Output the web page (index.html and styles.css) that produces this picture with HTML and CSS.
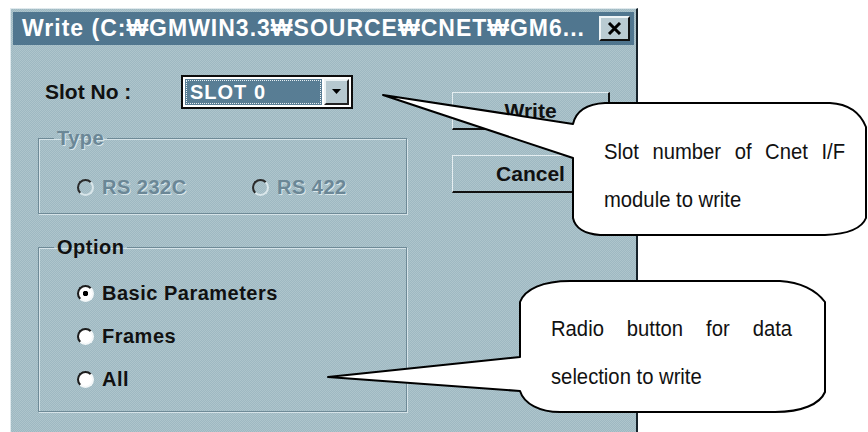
FILE: index.html
```html
<!DOCTYPE html>
<html lang="en">

<head>
    <meta charset="UTF-8">
    <meta name="viewport" content="width=device-width, initial-scale=1.0">
    <title>Write</title>
    <link rel="stylesheet" href="styles.css">
</head>

<body>
    <div class="dialog">
        <div class="titlebar">
            <span class="title">Write (C:₩GMWIN3.3₩SOURCE₩CNET₩GM6...</span>
            <span class="close">
                <svg width="15" height="13" viewBox="0 0 15 13">
                    <path d="M2 1 L13 12 M13 1 L2 12" stroke="#000" stroke-width="3" fill="none"/>
                </svg>
            </span>
        </div>
        <div class="content">
            <div class="left">
                <div class="slot-row">
                    <span class="label">Slot No :</span>
                    <div class="combo">
                        <div class="combo-field"><span class="focus">SLOT 0</span></div>
                        <div class="combo-btn">
                            <svg width="9" height="6" viewBox="0 0 9 6"><path d="M0 0 H9 L4.5 5 Z" fill="#000"/></svg>
                        </div>
                    </div>
                </div>

                <fieldset class="group group-type disabled">
                    <legend>Type</legend>
                    <div class="radio-row">
                        <label class="radio"><span class="dot"></span>RS 232C</label>
                        <label class="radio"><span class="dot"></span>RS 422</label>
                    </div>
                </fieldset>

                <fieldset class="group group-option">
                    <legend>Option</legend>
                    <div class="radio-list">
                        <label class="radio"><span class="dot checked"></span>Basic Parameters</label>
                        <label class="radio"><span class="dot"></span>Frames</label>
                        <label class="radio"><span class="dot"></span>All</label>
                    </div>
                </fieldset>
            </div>

            <div class="buttons">
                <div class="btn">Write</div>
                <div class="btn">Cancel</div>
            </div>
        </div>
    </div>

    <!-- callouts drawn over the dialog -->
    <svg class="callouts" width="868" height="432" viewBox="0 0 868 432">
        <path d="M383 95 L573 124 C576 111 586 104 605 103 L830 103 C848 104 860 112 866 127 L866 218 C862 228 850 234 825 235 L600 235 C585 234 575 228 573 218 L573 158 Z"/>
        <path d="M328 377 L520 357 L520 302 C525 289 543 281 570 281 L780 281 C800 282 816 290 825 302 L825 392 C820 404 802 412 775 412 L560 412 C540 412 524 404 520 391 Z"/>
    </svg>
    <div class="note note-slot">Slot number of Cnet I/F module to write</div>
    <div class="note note-radio">Radio button for data selection to write</div>
</body>

</html>
```

FILE: styles.css
```css
* {
    margin: 0;
    padding: 0;
    box-sizing: border-box;
}

html,
body {
    height: 100%;
    overflow: hidden;
    background: #fff;
}

body {
    font-family: "Liberation Sans", Arial, sans-serif;
}

.dialog {
    margin: 8px 0 0 10px;
    width: 628px;
    height: 424px;
    border-left: 1px solid #dfe9ed;
    border-top: 1px solid #dfe9ed;
    border-right: 2px solid #17232b;
    padding: 3px 2px 0 2px;
    background-color: #a6bec7;
    background-image: repeating-conic-gradient(#9eb8c2 0 25%, #aec5cc 0 50%);
    background-size: 2px 2px;
    overflow: hidden;
}

.titlebar {
    height: 33px;
    background: #50768f;
    display: flex;
    align-items: center;
    justify-content: space-between;
    padding: 0 4px 0 9px;
}

.title {
    color: #fff;
    font-weight: bold;
    font-size: 23px;
    letter-spacing: 1px;
    white-space: nowrap;
}

.close {
    width: 31px;
    height: 25px;
    background: #b9cbd2;
    border: 2px solid;
    border-color: #eef4f6 #101010 #101010 #eef4f6;
    display: flex;
    align-items: center;
    justify-content: center;
}

.content {
    display: flex;
    padding-left: 25px;
}

.left {
    width: 369px;
}

.slot-row {
    margin-top: 30px;
    height: 34px;
    display: flex;
    align-items: center;
}

.label {
    width: 143px;
    padding-left: 7px;
    font-weight: bold;
    font-size: 21px;
    color: #111;
}

.combo {
    width: 172px;
    height: 34px;
    display: flex;
    border: 2px solid #0c0c0c;
    background: #fff;
    padding: 2px;
}

.combo-field {
    flex: 1;
    background: #587d94;
    padding: 1px;
    margin-right: 2px;
}

.focus {
    display: block;
    height: 100%;
    border: 1px dotted #e6eef1;
    color: #fff;
    font-weight: bold;
    font-size: 20px;
    line-height: 22px;
    letter-spacing: 1px;
    padding-left: 3px;
}

.combo-btn {
    width: 25px;
    background: #b6c8cf;
    border: 2px solid;
    border-color: #eaf1f3 #222 #222 #eaf1f3;
    display: flex;
    align-items: center;
    justify-content: center;
}

.group {
    width: 369px;
    min-width: 0;
    border: 1px solid #6e8a97;
    box-shadow: inset 1px 1px 0 #d6e3e8, 1px 1px 0 #d6e3e8;
}

.group legend {
    margin-left: 15px;
    padding: 0 3px;
    font-weight: bold;
    font-size: 20px;
    line-height: 20px;
    letter-spacing: 0.5px;
    color: #111;
}

.group-type {
    margin-top: 19px;
    height: 86px;
    padding-top: 28px;
}

.group-option {
    margin-top: 23px;
    height: 175px;
    padding-top: 25px;
}

.radio-row {
    display: flex;
    padding-left: 38px;
}

.radio-row .radio:first-child {
    width: 175px;
}

.radio-list {
    display: flex;
    flex-direction: column;
    gap: 21px;
    padding-left: 38px;
}

.radio {
    display: flex;
    align-items: center;
    height: 22px;
    font-weight: bold;
    font-size: 20px;
    letter-spacing: 0.5px;
    color: #111;
}

.dot {
    width: 17px;
    height: 17px;
    border-radius: 50%;
    border: 2px solid;
    border-color: #1c1c1c #f4f8f9 #f4f8f9 #1c1c1c;
    background: #fff;
    margin-right: 8px;
    flex: none;
}

.dot.checked {
    background: radial-gradient(circle, #000 0 2.5px, #fff 3px);
}

.disabled legend,
.disabled .radio {
    color: #6b8796;
    text-shadow: 1px 1px 0 #d9e6ea;
}

.disabled .dot {
    background: transparent;
    border-color: #2a2a2a #d9e6ea #d9e6ea #2a2a2a;
}

.buttons {
    margin-left: 45px;
    width: 158px;
}

.btn {
    height: 38px;
    border-top: 1px solid #e4edf0;
    border-left: 1px solid #e4edf0;
    border-right: 2px solid #111;
    border-bottom: 2px solid #111;
    display: flex;
    align-items: center;
    justify-content: center;
    font-weight: bold;
    font-size: 21px;
    color: #111;
}

.btn:first-child {
    margin-top: 47px;
}

.btn + .btn {
    margin-top: 25px;
}

.callouts {
    position: absolute;
    left: 0;
    top: 0;
    pointer-events: none;
}

.callouts path {
    fill: #fff;
    stroke: #000;
    stroke-width: 2;
    stroke-linejoin: round;
}

/* narrow face: no condensed font installed, so squeeze Liberation Sans */
.note {
    position: absolute;
    width: 262px;
    font-size: 22px;
    line-height: 48px;
    text-align: justify;
    color: #111;
    transform: scaleX(0.92);
    transform-origin: 0 0;
}

.note-slot {
    left: 604px;
    top: 128px;
}

.note-radio {
    left: 551px;
    top: 305px;
}
```
